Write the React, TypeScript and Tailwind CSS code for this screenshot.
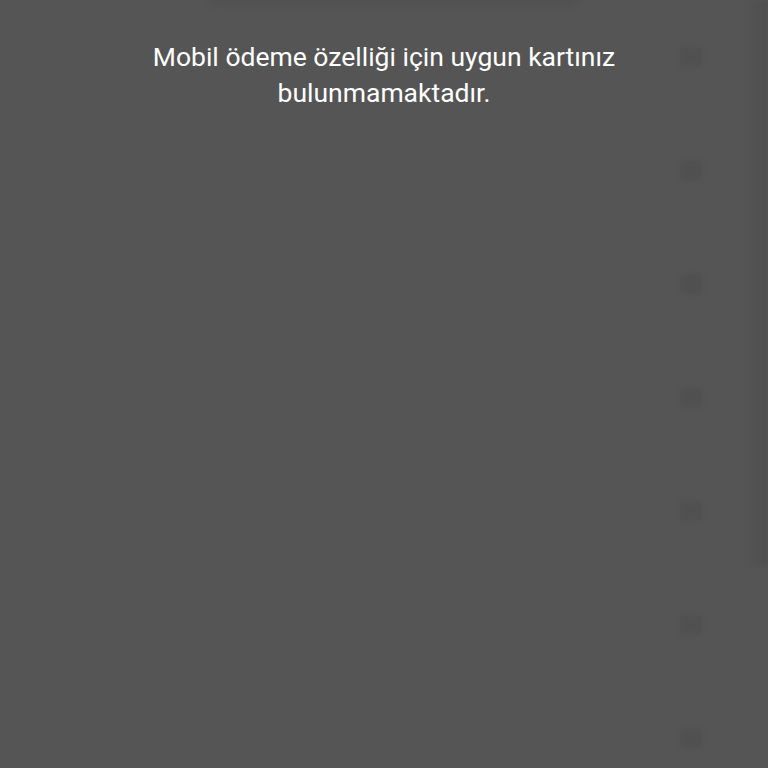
import React from "react";

export default function App() {
  const marks = [0, 1, 2, 3, 4, 5, 6];
  return (
    <div className="relative w-[768px] h-[768px] overflow-hidden bg-[#555555]" style={{ fontFamily: "Roboto, 'Noto Sans', sans-serif" }}>
      <div className="absolute left-[210px] top-[-8px] w-[370px] h-[14px] bg-[#4e4e4e] blur-[4px] rounded-full opacity-60" />
      <div className="absolute right-0 top-0 w-[24px] h-[565px] bg-gradient-to-r from-[#555555] to-[#4e4e4e] blur-[2px]" />
      <div className="absolute left-[680px] top-[47px] flex flex-col gap-[93.5px]">
        {marks.map((i) => (
          <div key={i} className="w-[22px] h-[20px] bg-[#4f4f4f] blur-[2px] opacity-70" />
        ))}
      </div>
      <div className="relative flex flex-col items-center pt-[39px] text-white text-[26.5px] leading-[36px] text-center">
        <p>Mobil ödeme özelliği için uygun kartınız</p>
        <p>bulunmamaktadır.</p>
      </div>
    </div>
  );
}
